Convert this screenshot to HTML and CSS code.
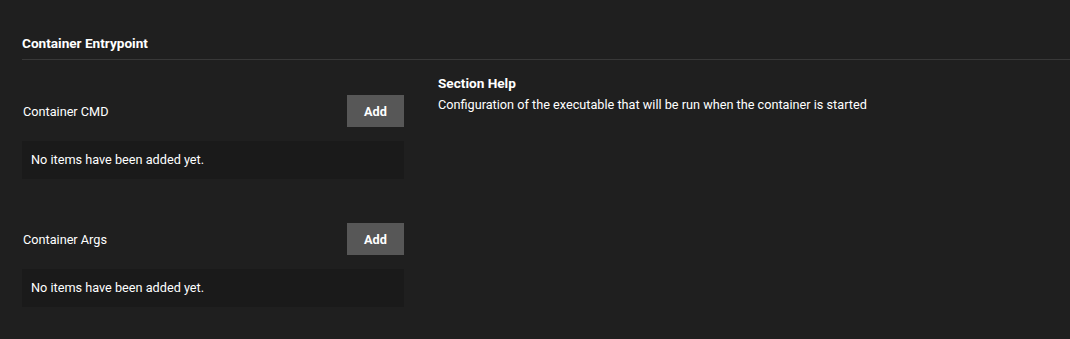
FILE: index.html
```html
<!DOCTYPE html>
<html lang="en">
<head>
    <meta charset="UTF-8">
    <title>Container Entrypoint</title>
    <link rel="stylesheet" href="styles.css">
</head>
<body>
    <div class="section">
        <h3 class="section-title">Container Entrypoint</h3>
        <div class="section-body">
            <div class="fields">
                <div class="list-field">
                    <div class="list-head">
                        <span class="list-label">Container CMD</span>
                        <button class="button">Add</button>
                    </div>
                    <div class="empty">No items have been added yet.</div>
                </div>
                <div class="list-field">
                    <div class="list-head">
                        <span class="list-label">Container Args</span>
                        <button class="button">Add</button>
                    </div>
                    <div class="empty">No items have been added yet.</div>
                </div>
            </div>
            <div class="help">
                <h4 class="help-title">Section Help</h4>
                <p class="help-text">Configuration of the executable that will be run when the container is started</p>
            </div>
        </div>
    </div>
</body>
</html>
```

FILE: styles.css
```css
* {
    margin: 0;
    padding: 0;
    box-sizing: border-box;
    font-family: Roboto, 'Liberation Sans', sans-serif;
}
body {
    background-color: #1f1f1f;
    color: #ffffff;
    padding: 35px 0 0 22px;
}
.section-title {
    font-size: 13.6px;
    font-weight: 700;
    line-height: 16px;
    padding-bottom: 8px;
    border-bottom: 1px solid #383838;
}
.section-body {
    display: flex;
}
.fields {
    width: 382px;
    padding-top: 35px;
}
.list-field {
    margin-bottom: 44px;
}
.list-head {
    display: flex;
    justify-content: space-between;
    align-items: center;
    padding-left: 1px;
}
.list-label {
    font-size: 12.7px;
}
.button {
    width: 57px;
    height: 32px;
    background: #575757;
    color: #ffffff;
    border: none;
    font-size: 12.7px;
    font-weight: 700;
    cursor: pointer;
}
.empty {
    margin-top: 14px;
    height: 38px;
    line-height: 38px;
    padding-left: 9px;
    background: #1a1a1a;
    font-size: 12.7px;
}
.help {
    margin-left: 34px;
    padding-top: 14px;
}
.help-title {
    font-size: 13.6px;
    font-weight: 700;
    line-height: 18px;
}
.help-text {
    font-size: 12.7px;
    line-height: 16px;
    margin-top: 5px;
}
```
